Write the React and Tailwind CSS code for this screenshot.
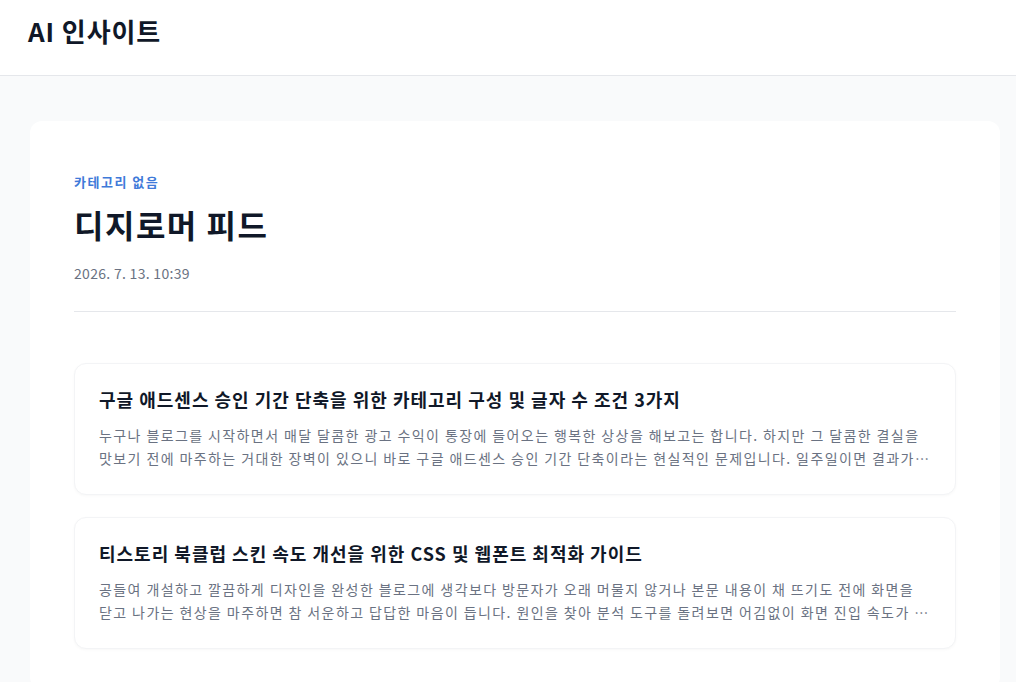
const posts = [
  {
    id: 1,
    title: "구글 애드센스 승인 기간 단축을 위한 카테고리 구성 및 글자 수 조건 3가지",
    excerpt:
      "누구나 블로그를 시작하면서 매달 달콤한 광고 수익이 통장에 들어오는 행복한 상상을 해보고는 합니다. 하지만 그 달콤한 결실을 맛보기 전에 마주하는 거대한 장벽이 있으니 바로 구글 애드센스 승인 기간 단축이라는 현실적인 문제입니다. 일주일이면 결과가 나온다는 사람도 있고 한 달이 넘도록 소식이 없다는 사람도 있습니다.",
  },
  {
    id: 2,
    title: "티스토리 북클럽 스킨 속도 개선을 위한 CSS 및 웹폰트 최적화 가이드",
    excerpt:
      "공들여 개설하고 깔끔하게 디자인을 완성한 블로그에 생각보다 방문자가 오래 머물지 않거나 본문 내용이 채 뜨기도 전에 화면을 닫고 나가는 현상을 마주하면 참 서운하고 답답한 마음이 듭니다. 원인을 찾아 분석 도구를 돌려보면 어김없이 화면 진입 속도가 느리다는 결과가 나옵니다.",
  },
];

function PostCard({ post }) {
  return (
    <article className="rounded-xl border border-gray-100 bg-white px-6 pt-[21px] pb-[24px] shadow-[0_1px_3px_rgba(0,0,0,0.03)]">
      <h3 className="text-lg leading-7 font-bold tracking-[1px] text-gray-900">{post.title}</h3>
      <p className="mt-[11px] text-sm leading-[23px] tracking-[1.4px] text-gray-500 line-clamp-2">{post.excerpt}</p>
    </article>
  );
}

export default function App() {
  return (
    <div
      className="min-h-screen bg-gray-50"
      style={{ fontFamily: '"Noto Sans CJK KR", "Noto Sans", sans-serif' }}
    >
      <header className="h-[76px] border-b border-gray-200 bg-white px-7 flex items-center">
        <h1 className="text-[26px] font-bold tracking-[0.9px] text-gray-900 -mt-[14px]">AI 인사이트</h1>
      </header>

      <main className="pt-[45px] pl-[30px] pr-4">
        <section className="rounded-xl bg-white px-[44px] pt-[51px] pb-10">
          <p className="text-[13px] leading-5 font-semibold tracking-[1.5px] text-[#3f7ad9]">카테고리 없음</p>
          <h2 className="mt-[12px] text-[32px] leading-10 font-bold tracking-[1.5px] text-gray-900">디지로머 피드</h2>
          <p className="mt-[19px] text-sm leading-5 tracking-[0.3px] text-gray-500">2026. 7. 13. 10:39</p>
          <div className="mt-[28px] border-t border-gray-200" />

          <div className="mt-[51px] flex flex-col gap-[22px]">
            {posts.map((post) => (
              <PostCard key={post.id} post={post} />
            ))}
          </div>
        </section>
      </main>
    </div>
  );
}
